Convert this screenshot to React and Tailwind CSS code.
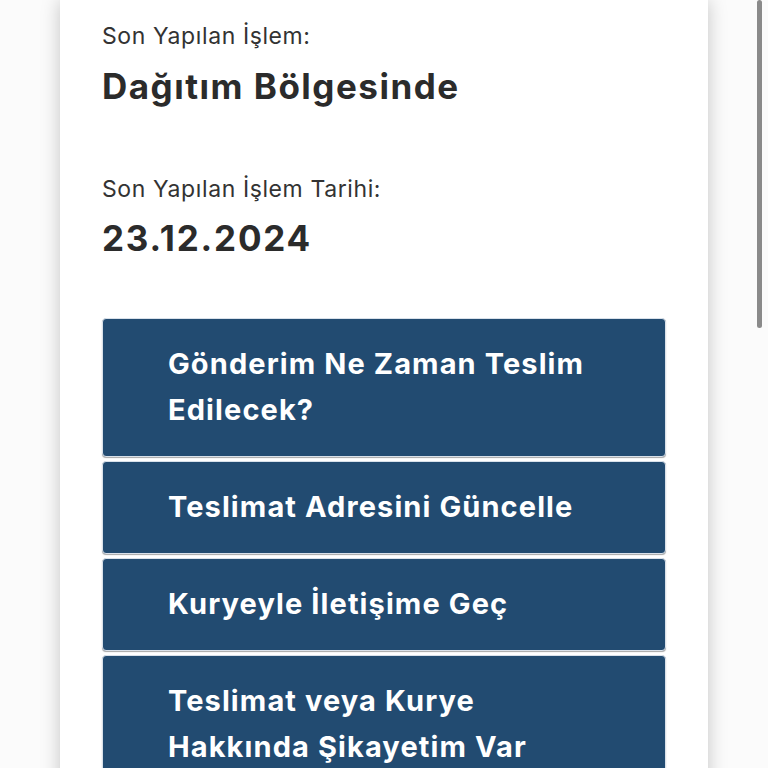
const actions = [
    'Gönderim Ne Zaman Teslim Edilecek?',
    'Teslimat Adresini Güncelle',
    'Kuryeyle İletişime Geç',
    'Teslimat veya Kurye Hakkında Şikayetim Var',
];

const App = () => {
    return (
        <div className="relative h-[768px] overflow-hidden bg-[#fbfbfb] px-[60px] font-['Inter',sans-serif]">
            <div className="min-h-[900px] w-[648px] bg-white pl-[42px] pr-[42px] pt-[21px] shadow-[0_0_18px_rgba(0,0,0,0.22)]">
                <div className="text-[23px] leading-[30px] tracking-[0.6px] text-[#333]">Son Yapılan İşlem:</div>
                <div className="mt-[13px] text-[35px] font-bold leading-[44px] tracking-[1.5px] text-[#2b2b2b]">Dağıtım Bölgesinde</div>

                <div className="mt-[66px] text-[23px] leading-[30px] tracking-[0.6px] text-[#333]">Son Yapılan İşlem Tarihi:</div>
                <div className="mt-[12px] text-[35px] font-bold leading-[44px] tracking-[1.8px] text-[#2b2b2b]">23.12.2024</div>

                <div className="mt-[58px] flex flex-col gap-[4px]">
                    {actions.map(a => (
                        <button
                            key={a}
                            className="w-full rounded-[4px] border border-[#d9e1ea] bg-[#224b71] pb-[23px] pl-[65px] pr-[56px] pt-[22px] text-left text-[29px] font-bold leading-[46px] tracking-[1.1px] text-white shadow-[0_1px_1px_rgba(0,0,0,0.35)]"
                        >
                            {a}
                        </button>
                    ))}
                </div>
            </div>
            <div className="absolute left-[757px] top-0 h-[328px] w-[5px] rounded-full bg-[#8a8a8a]" />
        </div>
    );
};

export default App;
